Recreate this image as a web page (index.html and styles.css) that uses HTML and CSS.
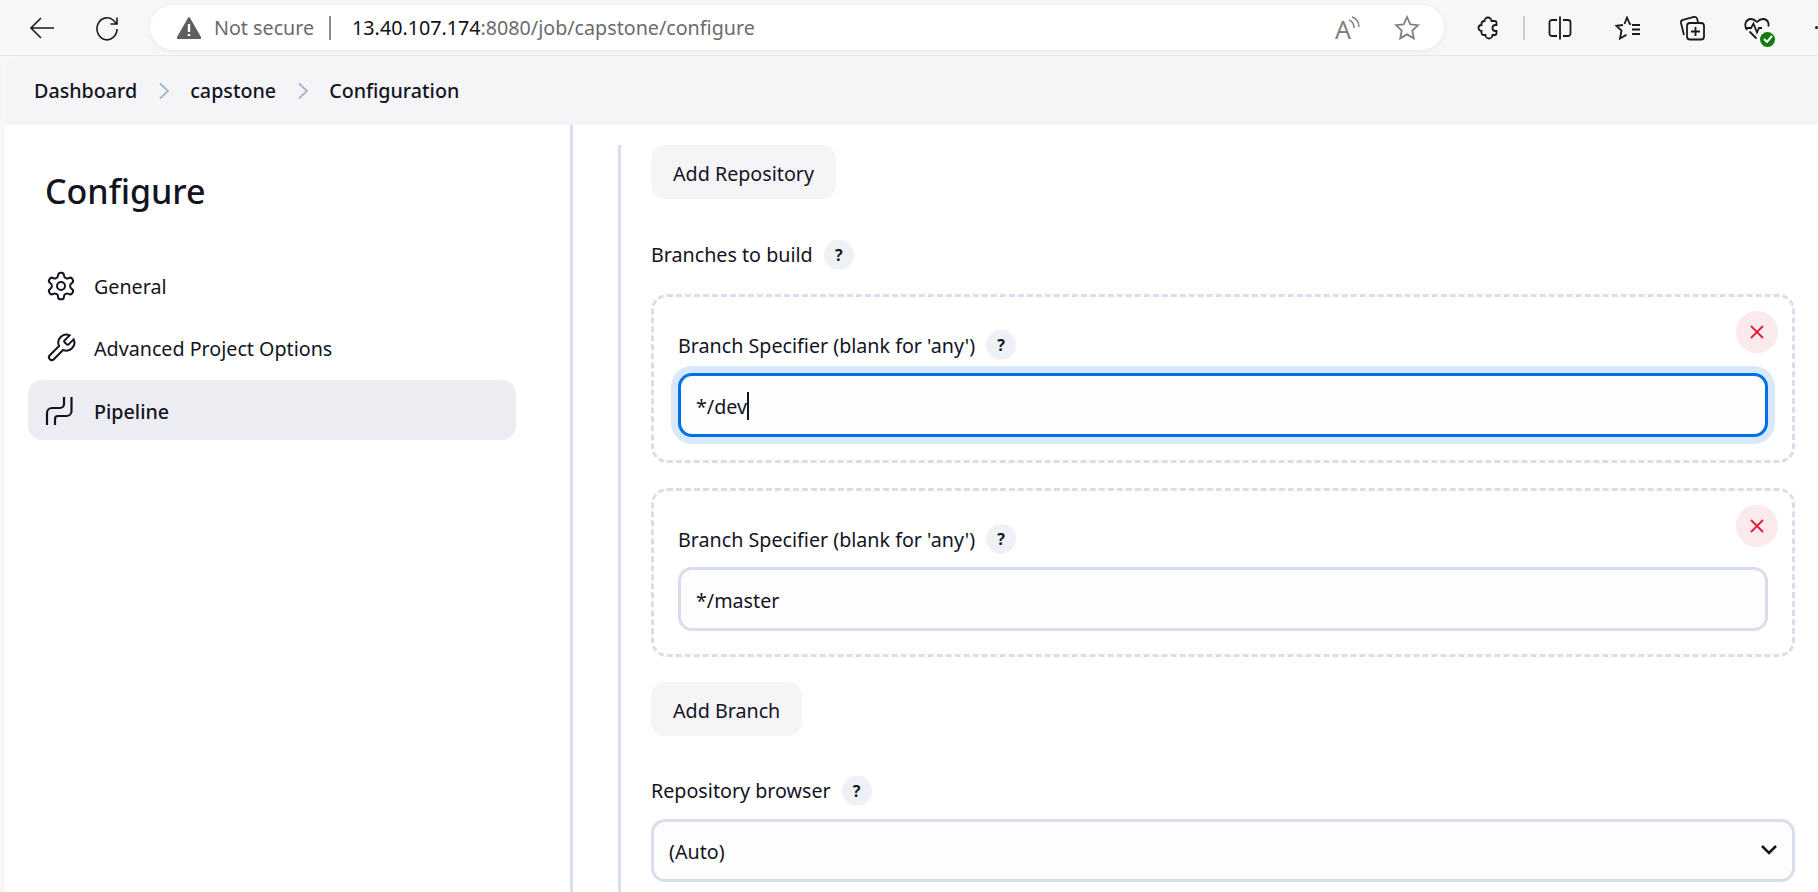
FILE: index.html
```html
<!DOCTYPE html>
<html lang="en">
<head>
  <meta charset="UTF-8" />
  <title>capstone Config [Jenkins]</title>
  <link rel="stylesheet" href="styles.css">
</head>
<body>
<!-- BROWSER TOOLBAR -->
<header class="toolbar">
  <svg class="tool-back" width="26" height="24" viewBox="0 0 26 24"><path d="M25 12H2M12 2 2 12l10 10"/></svg>
  <svg class="tool-reload" width="26" height="26" viewBox="0 0 26 26"><path d="M23 14a10 11 0 1 1-4-9l4 4M23 2.500V9h-6.500"/></svg>
  <div class="address">
    <svg class="warn" width="24" height="22" viewBox="0 0 24 22"><path d="M12 1 23.500 21H.5z" fill="#5f5f5f" stroke="#5f5f5f" stroke-linejoin="round"/><path d="M12 7v8M12 17v2" stroke="#fff" stroke-width="2.400"/></svg>
    <span class="not-secure">Not secure</span>
    <span class="address-sep"></span>
    <span class="url"><b>13.40.107.174</b>:8080/job/capstone/configure</span>
    <span class="read"><span class="read-a">A</span><svg width="12" height="14" viewBox="0 0 12 14"><path d="M1 4c3 1 5 4 5 8M4 1c4 1 7 5 7 10"/></svg></span>
    <svg class="star" width="26" height="26" viewBox="0 0 26 26"><path d="m13 2 3.300 7.300 7.700.9-5.700 5.300 1.500 7.900-6.800-4-6.800 4 1.500-7.900L2 10.200l7.700-.9z"/></svg>
  </div>
  <div class="tools">
    <svg class="ext" width="24" height="26" viewBox="0 0 24 26"><path d="M8.500 6a3.500 3.500 0 0 1 7 0h3a2 2 0 0 1 2 2v2h-1a3 3 0 0 0 0 6h1v2a2 2 0 0 1-2 2h-2a3.500 3.500 0 0 1-7 0h-2a2 2 0 0 1-2-2v-2a3 3 0 0 1 0-6V9a3 3 0 0 1 3-3z"/></svg>
    <span class="tools-sep"></span>
    <svg class="split" width="24" height="26" viewBox="0 0 24 26"><path d="M9 5H4a2.500 2.500 0 0 0-2.500 2.500v11A2.500 2.500 0 0 0 4 21h5M15 5h5a2.500 2.500 0 0 1 2.500 2.500v11A2.500 2.500 0 0 1 20 21h-5M12 1.500v23"/></svg>
    <svg class="favs" width="26" height="24" viewBox="0 0 26 24"><path d="m9.500 8 2.500-6.500L14.800 8l1.200.2M8 9l-6.500.8 5 4.700L5 22.500l6.500-3.800M17 9h8M17 13.500h8M17 18h8"/></svg>
    <svg class="coll" width="26" height="26" viewBox="0 0 26 26"><rect x="8" y="8" width="17" height="16.500" rx="3"/><path d="M16.500 12v9M12 16.500h9M5 20 2 8c-.3-1.500.5-2.800 2-3.200L15 2c1.500-.3 2.700.3 3.200 2l.8 3"/></svg>
    <span class="health">
      <svg width="26" height="26" viewBox="0 0 26 26"><path d="M3 15C1 12 1 9 2 7c1.800-3.500 6.800-4.500 11 0 4.200-4.500 9.200-3.500 11 0 .7 1.500.8 3 .3 4.500M1 13h6l2.500-4.500 3.500 9 2-4.500h3M5.500 16.500l7 7"/></svg>
      <span class="health-dot"><svg width="10" height="8" viewBox="0 0 10 8"><path d="m1 4 3 3 5-6"/></svg></span>
    </span>
    <span class="more-dot"></span>
  </div>
</header>

<div class="page">
  <!-- BREADCRUMB -->
  <nav class="crumbs">
    <a>Dashboard</a>
    <svg width="12" height="18" viewBox="0 0 12 18"><path d="m2 1.500 8 7.500-8 7.500"/></svg>
    <a>capstone</a>
    <svg width="12" height="18" viewBox="0 0 12 18"><path d="m2 1.500 8 7.500-8 7.500"/></svg>
    <a>Configuration</a>
  </nav>

  <div class="layout">
    <!-- SIDE PANEL -->
    <aside class="side">
      <h1>Configure</h1>
      <ul class="side-list">
        <li class="side-item">
          <svg width="32" height="32" viewBox="0 0 24 24"><path d="M12.220 2h-.44a2 2 0 0 0-2 2v.18a2 2 0 0 1-1 1.730l-.43.25a2 2 0 0 1-2 0l-.15-.08a2 2 0 0 0-2.730.73l-.22.38a2 2 0 0 0 .73 2.730l.15.1a2 2 0 0 1 1 1.720v.51a2 2 0 0 1-1 1.740l-.15.09a2 2 0 0 0-.73 2.730l.22.38a2 2 0 0 0 2.730.73l.15-.08a2 2 0 0 1 2 0l.43.25a2 2 0 0 1 1 1.730V20a2 2 0 0 0 2 2h.44a2 2 0 0 0 2-2v-.18a2 2 0 0 1 1-1.730l.43-.25a2 2 0 0 1 2 0l.15.08a2 2 0 0 0 2.730-.73l.22-.39a2 2 0 0 0-.73-2.730l-.15-.08a2 2 0 0 1-1-1.740v-.5a2 2 0 0 1 1-1.740l.15-.09a2 2 0 0 0 .73-2.730l-.22-.38a2 2 0 0 0-2.730-.73l-.15.08a2 2 0 0 1-2 0l-.43-.25a2 2 0 0 1-1-1.730V4a2 2 0 0 0-2-2z"/><circle cx="12" cy="12" r="3"/></svg>
          General
        </li>
        <li class="side-item">
          <svg width="32" height="32" viewBox="0 0 24 24"><path d="M14.700 6.300a1 1 0 0 0 0 1.400l1.600 1.600a1 1 0 0 0 1.400 0l3.770-3.770a6 6 0 0 1-7.940 7.940l-6.910 6.910a2.120 2.120 0 0 1-3-3l6.910-6.910a6 6 0 0 1 7.940-7.940l-3.760 3.760z"/></svg>
          Advanced Project Options
        </li>
        <li class="side-item active">
          <svg class="pipe" width="32" height="32" viewBox="7 8 32 32"><path d="M26 10v7a4 4 0 0 1-4 4h-8a5 5 0 0 0-5 5v12M33.500 10v14a5 5 0 0 1-5 5H20a3 3 0 0 0-3 3v6"/></svg>
          Pipeline
        </li>
      </ul>
    </aside>

    <!-- FORM -->
    <main class="content">
      <div class="section">
        <button class="btn">Add Repository</button>

        <div class="field-label first"><span>Branches to build</span><span class="help">?</span></div>

        <div class="branch">
          <button class="del"><svg width="14" height="14" viewBox="0 0 14 14"><path d="m1 1 12 12M13 1 1 13"/></svg></button>
          <div class="field-label"><span>Branch Specifier (blank for 'any')</span><span class="help">?</span></div>
          <div class="input focused">*/dev<span class="caret"></span></div>
        </div>

        <div class="branch">
          <button class="del"><svg width="14" height="14" viewBox="0 0 14 14"><path d="m1 1 12 12M13 1 1 13"/></svg></button>
          <div class="field-label"><span>Branch Specifier (blank for 'any')</span><span class="help">?</span></div>
          <div class="input">*/master</div>
        </div>

        <button class="btn">Add Branch</button>

        <div class="field-label browser"><span>Repository browser</span><span class="help">?</span></div>
        <div class="select">(Auto)
          <svg width="18" height="12" viewBox="0 0 18 12"><path d="m2 2 7 7 7-7"/></svg>
        </div>
      </div>
    </main>
  </div>
</div>
</body>
</html>
```
FILE: styles.css
```css
:root { --ink:#14141f; --line:#d8dfea; --soft:#f5f5f8; }
*{box-sizing:border-box}
html,body{height:892px;overflow:hidden}
body{margin:0;background:#f7f7f7;color:var(--ink);font-family:"Noto Sans",Arial,sans-serif;font-size:19.7px}
svg{fill:none;stroke:currentColor;stroke-width:1.8;flex:none}

/* toolbar */
.toolbar{height:56px;display:flex;align-items:center;border-bottom:1px solid #e8e8e8;padding:0 0 0 29px;color:#1a1a1a}
.tool-back{stroke-width:1.6}
.tool-reload{margin-left:39px;stroke-width:1.6}
.address{margin-left:30px;width:1296px;height:45px;border-radius:23px;background:#fff;box-shadow:0 1px 4px rgba(0,0,0,.08);display:flex;align-items:center;padding-left:27px;color:#6b6b6b;font-size:19.7px}
.warn{stroke:none}
.not-secure{margin-left:13px}
.address-sep{width:2px;height:24px;background:#8c8c8c;margin:0 21px 0 15px}
.url{flex:1}
.url b{font-weight:400;color:#111}
.read{display:flex;align-items:flex-start;height:24px;color:#808080;margin-right:34px}
.read svg{stroke-width:1.4;margin-left:-3px}
.read-a{font-size:25px;line-height:26px}
.star{color:#808080;margin-right:24px}
.tools{display:flex;align-items:center;margin-left:32px}
.ext{margin-right:23px}
.tools-sep{width:2px;height:24px;background:#ccc;margin-right:23px}
.split{margin-right:43px}
.favs{margin-right:38px}
.coll{margin-right:39px}
.health{position:relative;display:flex;width:26px;height:26px;margin-right:45px}
.health-dot{position:absolute;right:-5px;bottom:-6px;width:15px;height:15px;border-radius:50%;background:#107c10;display:flex;align-items:center;justify-content:center;color:#fff}
.health-dot svg{stroke-width:2}
.more-dot{width:3px;height:3px;border-radius:50%;background:#1a1a1a;flex:none}

/* page */
.page{margin-left:5px;background:#fff;border-top-left-radius:10px;overflow:hidden}
.crumbs{height:69px;background:var(--soft);display:flex;align-items:center;padding-left:29px;font-weight:500}
.crumbs svg{color:#a3b5cb;margin:0 20px 0 21px}
.layout{display:flex;height:767px;background:#fff}

/* side panel */
.side{width:568px;flex:none;border-right:3px solid var(--line);padding:0 54px 0 23px}
.side h1{margin:0;padding:46px 0 0 17px;height:130px;font-size:34px;line-height:40px;font-weight:500}
.side-list{list-style:none;margin:0;padding:0;display:flex;flex-direction:column}
.side-item{height:62px;display:flex;align-items:center;gap:17px;padding-left:17px;border-radius:14px}
.side-item svg{stroke-width:1.500}
.side-item svg.pipe{stroke-width:2.200}
.side-item.active{height:60px;margin-top:1px;padding-top:2px;font-weight:500;background:#ecedf2}

/* form */
.content{flex:1;padding:20px 23px 0 45px}
.section{border-left:3px solid var(--line);padding-left:30px;height:100%}
.btn{display:block;height:54px;padding:2px 22px 0;border:none;border-radius:14px;background:var(--soft);color:var(--ink);font:inherit}
.field-label{display:flex;align-items:center;gap:11px;height:30px}
.field-label.first{margin-top:40px;margin-bottom:25px;padding-top:1px}
.field-label.browser{margin-top:39px;margin-bottom:14px;padding-top:1px}
.help{width:30px;height:30px;flex:none;border-radius:50%;background:#eef1f5;display:flex;align-items:center;justify-content:center;font-size:16px;font-weight:700}
.branch{position:relative;height:169px;margin-bottom:25px;border:3px dashed var(--line);border-radius:16px;padding:33px 24px 0}
.del{position:absolute;top:14px;right:14px;width:42px;height:42px;padding:0;border:none;border-radius:50%;background:#fbeaec;color:#e6173f;display:flex;align-items:center;justify-content:center}
.input{margin-top:13px;height:64px;border:3px solid var(--line);border-radius:14px;background:#fdfdfd;padding:2px 0 0 15px;display:flex;align-items:center}
.input.focused{border-color:#0070e8;box-shadow:0 0 0 7px #d9e9fb}
.caret{width:2px;height:28px;background:var(--ink)}
.select{position:relative;height:63px;border:3px solid var(--line);border-radius:14px;background:#fdfdfd;padding:2px 0 0 15px;display:flex;align-items:center}
.select svg{position:absolute;right:14px;top:22px;stroke-width:2.500}
```
